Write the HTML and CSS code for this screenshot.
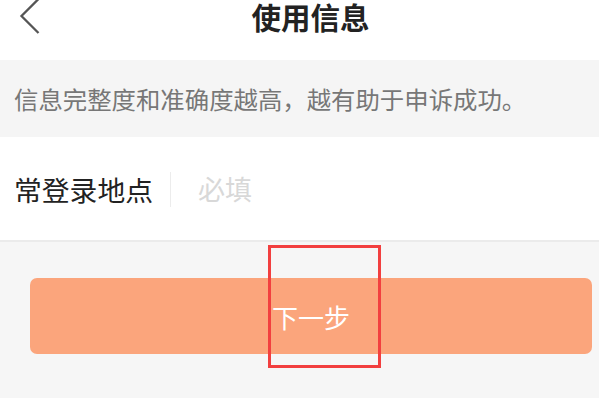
FILE: index.html
```html
<!DOCTYPE html>
<html lang="zh-CN">
<head>
<meta charset="utf-8">
<link rel="stylesheet" href="styles.css">
</head>
<body>
<div class="page">
  <header class="topbar">
    <svg class="back" width="40" height="60" viewBox="0 0 40 60"><polyline points="38.5,-1 21.5,16 38.5,33" fill="none" stroke="#555" stroke-width="2.3"/></svg>
    <h1 class="title">使用信息</h1>
  </header>
  <div class="notice">信息完整度和准确度越高，越有助于申诉成功。</div>
  <div class="field">
    <span class="label">常登录地点</span>
    <span class="divider"></span>
    <span class="placeholder">必填</span>
  </div>
  <div class="actions">
    <button class="next">下一步</button>
  </div>
  <div class="highlight"></div>
</div>
</body>
</html>
```
FILE: styles.css
```css
html, body {
  margin: 0;
  padding: 0;
}
body {
  background: #f6f6f6;
  font-family: "Noto Sans CJK SC", "Noto Sans", sans-serif;
}
.page {
  position: relative;
  width: 599px;
  height: 398px;
  overflow: hidden;
}
.topbar {
  position: relative;
  height: 60px;
  background: #fff;
  display: flex;
  justify-content: center;
  align-items: flex-start;
}
.back {
  position: absolute;
  left: 0;
  top: 0;
}
.title {
  margin: 0;
  padding: 0 0 0 22px;
  font-size: 29.5px;
  font-weight: bold;
  color: #222;
  line-height: 32px;
}
.notice {
  height: 77px;
  background: #f5f5f5;
  color: #777;
  font-size: 24.4px;
  line-height: 77px;
  padding-left: 14px;
  white-space: nowrap;
}
.field {
  height: 103px;
  background: #fff;
  border-bottom: 2px solid #ebebeb;
  display: flex;
  align-items: center;
  padding-left: 14px;
}
.label {
  font-size: 27.8px;
  color: #222;
  line-height: 30px;
}
.divider {
  width: 1px;
  height: 35px;
  background: #ececec;
  margin: 2px 27px 0 17px;
}
.placeholder {
  font-size: 27px;
  color: #d8d8d8;
  line-height: 30px;
}
.actions {
  padding: 36px 7px 0 30px;
}
.next {
  display: block;
  width: 562px;
  height: 76px;
  border: none;
  border-radius: 7px;
  background: #fba57c;
  color: #fff;
  font-family: "Noto Sans CJK SC", "Noto Sans", sans-serif;
  font-size: 26px;
  padding: 0;
}
.highlight {
  position: absolute;
  left: 268px;
  top: 245px;
  width: 107px;
  height: 117px;
  border: 3px solid #f23f3f;
}
```
